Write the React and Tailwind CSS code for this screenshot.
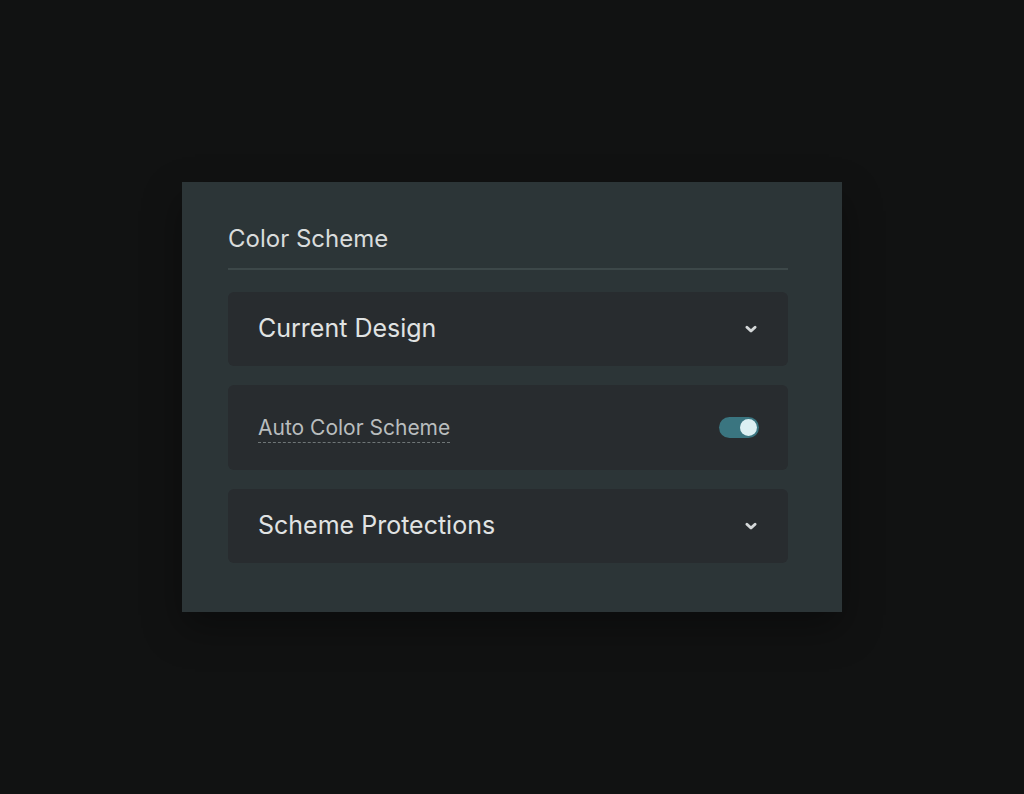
import React, { useState } from 'react';

const Chevron = () => (
  <svg width="14" height="14" viewBox="0 0 24 24" fill="none" stroke="#d4d8d9" strokeWidth="5" strokeLinecap="round" strokeLinejoin="round">
    <path d="M5 9l7 6.5 7-6.5" />
  </svg>
);

const App = () => {
  const [auto, setAuto] = useState(true);

  return (
    <div className="min-h-screen w-full bg-[#111212] flex items-start justify-center pt-[182px]" style={{ fontFamily: 'Inter, "Noto Sans", sans-serif' }}>
      <div className="w-[660px] h-[430px] bg-[#2c3537] pl-[46px] pr-[54px] pt-[40px] shadow-[0_16px_36px_rgba(0,0,0,0.35)]">
        <h2 className="text-[24px] text-[#d9dcdc] leading-[34px] pb-[12px] border-b-2 border-[#3d4849]">Color Scheme</h2>

        <div className="mt-[22px] flex flex-col gap-[19px]">
          <button className="h-[74px] w-full rounded-md bg-[#282c2f] flex items-center justify-between pl-[30px] pr-[30px] text-left">
            <span className="text-[25px] text-[#e0e3e3]">Current Design</span>
            <Chevron />
          </button>

          <div className="h-[85px] w-full rounded-md bg-[#282c2f] flex items-center justify-between pl-[30px] pr-[29px]">
            <span className="text-[21px] text-[#b9bdbe] border-b border-dashed border-[#6f7677] leading-[28px] mt-[2px]">Auto Color Scheme</span>
            <button
              onClick={() => setAuto(!auto)}
              className={`w-[40px] h-[21px] rounded-full flex items-center px-[2px] ${auto ? 'bg-[#3a7580] justify-end' : 'bg-[#4a5254] justify-start'}`}
            >
              <span className="w-[17px] h-[17px] rounded-full bg-[#dcf0f3]" />
            </button>
          </div>

          <button className="h-[74px] w-full rounded-md bg-[#282c2f] flex items-center justify-between pl-[30px] pr-[30px] text-left">
            <span className="text-[25px] text-[#e0e3e3]">Scheme Protections</span>
            <Chevron />
          </button>
        </div>
      </div>
    </div>
  );
};

export default App;
